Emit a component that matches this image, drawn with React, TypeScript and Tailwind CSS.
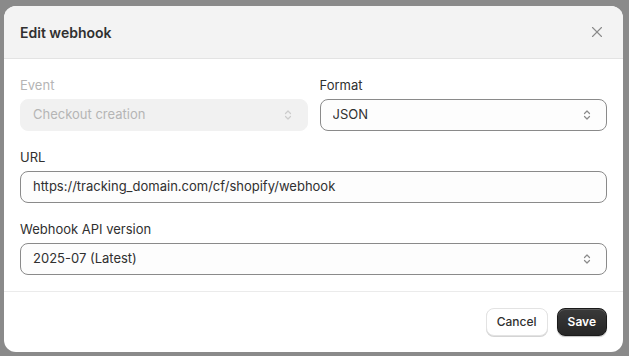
import React from 'react';
import { X } from 'lucide-react';

const SelectIcon = () => (
  <svg width="10" height="14" viewBox="0 0 10 14" fill="none" className="shrink-0">
    <path d="M2.5 5.5l2.5-2.5 2.5 2.5M2.5 8.5l2.5 2.5 2.5-2.5" stroke="currentColor" strokeWidth="1.2" strokeLinecap="round" strokeLinejoin="round" />
  </svg>
);

interface FieldProps {
  label: string;
  value: string;
  disabled?: boolean;
  select?: boolean;
}

const Field: React.FC<FieldProps> = ({ label, value, disabled, select }) => (
  <div className="flex flex-col">
    <label className={`h-5 leading-5 text-[13px] mb-1 ${disabled ? 'text-[#b5b5b5]' : 'text-[#303030]'}`}>
      {label}
    </label>
    <div
      className={`h-8 rounded-lg flex items-center pl-3 pr-[14px] text-[13px] ${
        disabled
          ? 'bg-[#f1f1f1] text-[#b5b5b5] border border-[#f1f1f1]'
          : 'bg-[#fdfdfd] text-[#303030] border border-[#8a8a8a]'
      }`}
    >
      <span className="flex-1 truncate">{value}</span>
      {select && (
        <span className={disabled ? 'text-[#cccccc]' : 'text-[#8a8a8a]'}>
          <SelectIcon />
        </span>
      )}
    </div>
  </div>
);

export default function App() {
  return (
    <div
      className="h-[356px] w-[629px] bg-[#8a8a8a] pt-[6px] pl-[4px] overflow-hidden"
      style={{ fontFamily: 'Inter, "Noto Sans", sans-serif' }}
    >
      <div className="w-[619px] h-[346px] bg-white rounded-xl overflow-hidden flex flex-col">
        {/* Header */}
        <div className="h-[53px] bg-[#f3f3f3] border-b border-[#e3e3e3] flex items-center justify-between pl-4 pr-[17px] shrink-0">
          <h2 className="text-[14px] font-semibold text-[#303030]">Edit webhook</h2>
          <X className="w-[18px] h-[18px] text-[#8a8a8a]" strokeWidth={1.5} />
        </div>

        {/* Body */}
        <div className="px-4 pt-4 pb-4 flex flex-col gap-4 border-b border-[#ebebeb]">
          <div className="grid grid-cols-2 gap-3">
            <Field label="Event" value="Checkout creation" disabled select />
            <Field label="Format" value="JSON" select />
          </div>
          <Field label="URL" value="https://tracking_domain.com/cf/shopify/webhook" />
          <Field label="Webhook API version" value="2025-07 (Latest)" select />
        </div>

        {/* Footer */}
        <div className="flex-1 flex items-center justify-end gap-[9px] px-4">
          <button className="h-7 px-[10px] rounded-lg bg-white border border-[#e3e3e3] shadow-[0_1px_0_0_#d4d4d4] text-[12px] font-medium text-[#303030]">
            Cancel
          </button>
          <button className="h-7 px-[10px] rounded-lg bg-gradient-to-b from-[#3a3a3a] to-[#262626] border border-[#1a1a1a] shadow-[inset_0_1px_0_0_#5a5a5a,0_1px_1px_0_#00000040] text-[12px] font-semibold text-white">
            Save
          </button>
        </div>
      </div>
    </div>
  );
}
